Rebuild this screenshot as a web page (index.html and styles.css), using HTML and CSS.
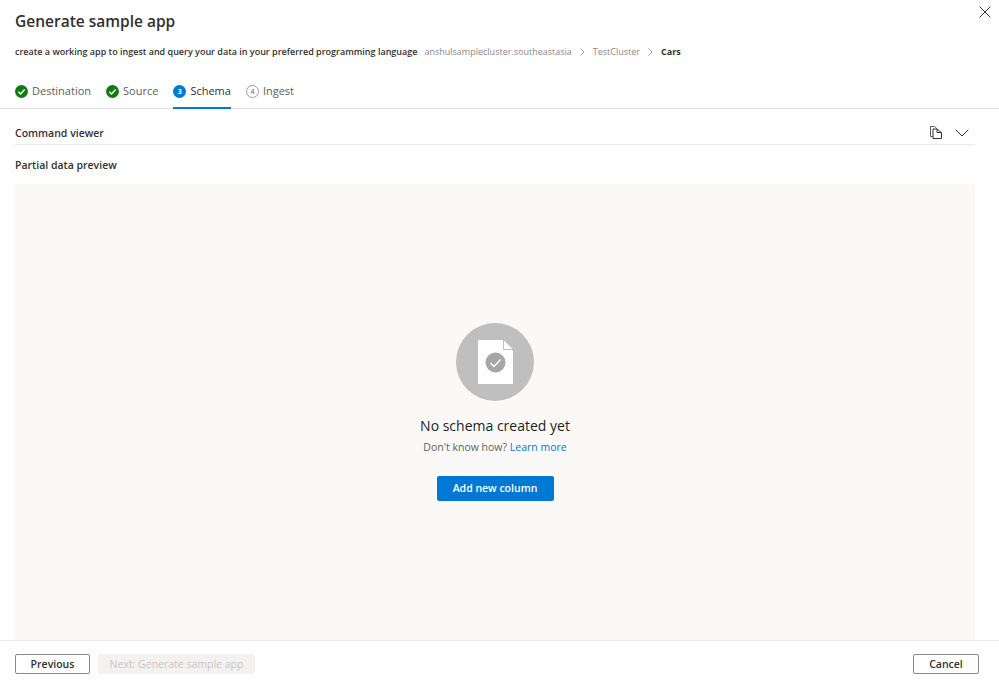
FILE: index.html
```html
<!DOCTYPE html>
<html lang="en">
<head>
<meta charset="utf-8">
<title>Generate sample app</title>
<link rel="stylesheet" href="styles.css">
</head>
<body>
<div class="panel">
  <header class="head">
    <h1 class="title">Generate sample app</h1>
    <button class="close" aria-label="Close">
      <svg width="12" height="12" viewBox="0 0 12 12"><path d="M.7.7l10.6 10.6M11.3.7L.7 11.3" stroke="#323130" stroke-width="1" fill="none"/></svg>
    </button>
    <div class="sub">
      <span class="sub-text">create a working app to ingest and query your data in your preferred programming language</span>
      <span class="crumb">anshulsamplecluster.southeastasia</span>
      <svg class="sep" width="5" height="8" viewBox="0 0 5 8"><path d="M.5.5L4 4 .5 7.5" stroke="#a19f9d" fill="none"/></svg>
      <span class="crumb">TestCluster</span>
      <svg class="sep" width="5" height="8" viewBox="0 0 5 8"><path d="M.5.5L4 4 .5 7.5" stroke="#a19f9d" fill="none"/></svg>
      <span class="crumb-cur">Cars</span>
    </div>
  </header>
  <nav class="tabs">
    <div class="tab">
      <svg class="ico" width="13" height="13" viewBox="0 0 13 13"><circle cx="6.5" cy="6.5" r="6.5" fill="#107c10"/><path d="M3.4 6.8l2.2 2.1 4-4.3" stroke="#fff" stroke-width="1.4" fill="none"/></svg>
      <span>Destination</span>
    </div>
    <div class="tab">
      <svg class="ico" width="13" height="13" viewBox="0 0 13 13"><circle cx="6.5" cy="6.5" r="6.5" fill="#107c10"/><path d="M3.4 6.8l2.2 2.1 4-4.3" stroke="#fff" stroke-width="1.4" fill="none"/></svg>
      <span>Source</span>
    </div>
    <div class="tab tab-on">
      <span class="num num-on">3</span>
      <span>Schema</span>
    </div>
    <div class="tab">
      <span class="num num-off">4</span>
      <span>Ingest</span>
    </div>
  </nav>
  <main class="body">
    <div class="cmd">
      <span class="label">Command viewer</span>
      <div class="cmd-icons">
        <svg width="12" height="13" viewBox="0 0 12 13"><path d="M.5 10.5V.5h4.2l3 3v7z" fill="#fff" stroke="#605e5c"/><path d="M3 3h3.8L11.5 6.5v6H3z" fill="#fff" stroke="#323130"/><path d="M7 3v3.500h4.500" fill="none" stroke="#323130"/></svg>
        <svg width="14" height="8" viewBox="0 0 14 8"><path d="M.7.7L7 7l6.300-6.300" stroke="#323130" fill="none"/></svg>
      </div>
    </div>
    <div class="label preview-label">Partial data preview</div>
    <section class="empty">
      <svg class="empty-ico" width="78" height="78" viewBox="0 0 78 78">
        <circle cx="39" cy="39" r="39" fill="#bfbfbf"/>
        <path d="M22 17h24l11 11v33H22z" fill="#fff"/>
        <path d="M47 17l10 10H47z" fill="#bfbfbf"/>
        <path d="M48 17.500l8.500 8.500H48z" fill="#fff"/>
        <circle cx="39.500" cy="39.500" r="10" fill="#a6a6a6"/>
        <path d="M34.500 40l3.500 3.500 6.500-7" stroke="#fff" stroke-width="1.300" fill="none"/>
      </svg>
      <div class="empty-title">No schema created yet</div>
      <div class="empty-text">Don't know how? <a class="link" href="#">Learn more</a></div>
      <button class="btn-primary">Add new column</button>
    </section>
  </main>
  <footer class="foot">
    <button class="btn">Previous</button>
    <button class="btn-disabled" disabled>Next: Generate sample app</button>
    <button class="btn btn-cancel">Cancel</button>
  </footer>
</div>
</body>
</html>
```
FILE: styles.css
```css
* { box-sizing: border-box; }
html, body { margin: 0; height: 100%; }
body { background: #fff; color: #323130; font-family: "Open Sans", "Noto Sans", sans-serif; overflow: hidden; }
.panel { width: 999px; height: 687px; display: flex; flex-direction: column; }
.head { position: relative; padding: 10px 15px 0; height: 79px; }
.title { margin: 0; font-size: 15.5px; font-weight: 600; line-height: 22px; color: #323130; }
.close { position: absolute; top: 6px; right: 8px; width: 12px; height: 12px; padding: 0; border: 0; background: none; display: flex; }
.sub { display: flex; align-items: center; margin-top: 12px; font-size: 9px; line-height: 16px; white-space: nowrap; }
.sub-text { font-weight: 600; color: #323130; font-size: 9px; }
.crumb { color: #8a8886; margin-left: 7px; font-size: 9px; }
.sep { margin-left: 8px; margin-right: 1px; }
.crumb-cur { font-weight: 700; margin-left: 7px; color: #323130; }
.tabs { display: flex; gap: 15px; padding: 0 15px; height: 30px; border-bottom: 1px solid #e1dfdd; }
.tab { display: flex; align-items: flex-start; gap: 4px; height: 30px; padding-top: 4px; font-size: 11px; line-height: 16px; color: #605e5c; }
.tab .ico { margin-top: 2px; }
.tab-on { border-bottom: 2px solid #0078d4; color: #323130; font-weight: 400; }
.num { width: 13px; height: 13px; margin-top: 2px; border-radius: 50%; font-size: 7px; line-height: 13px; text-align: center; }
.num-on { background: #0078d4; color: #fff; font-weight: 700; }
.num-off { border: 1px solid #a19f9d; line-height: 11px; color: #605e5c; }
.body { flex: 1; min-height: 0; padding: 0 24px 0 15px; display: flex; flex-direction: column; }
.cmd { display: flex; align-items: center; justify-content: space-between; height: 36px; border-bottom: 1px solid #edebe9; padding-top: 12px; }
.label { font-size: 10.500px; font-weight: 600; line-height: 16px; color: #323130; }
.cmd-icons { display: flex; align-items: center; gap: 13px; padding-right: 6px; }
.preview-label { margin-top: 12px; margin-bottom: 11px; }
.empty { flex: 1; min-height: 0; background: #faf9f8; display: flex; flex-direction: column; align-items: center; padding-top: 139px; }
.empty-title { margin-top: 15px; font-size: 14px; line-height: 20px; color: #201f1e; }
.empty-text { margin-top: 3px; font-size: 10.500px; line-height: 16px; color: #605e5c; }
.link { color: #0078d4; text-decoration: none; }
.btn-primary { margin-top: 21px; width: 117px; height: 25px; border: 0; border-radius: 2px; background: #0078d4; color: #fff; font: 600 10.500px/25px "Open Sans", sans-serif; padding: 0; }
.foot { display: flex; align-items: center; gap: 8px; height: 47px; padding: 0 20px 0 15px; border-top: 1px solid #edebe9; flex: none; }
.btn { width: 75px; height: 20px; padding: 0; background: #fff; border: 1px solid #8a8886; border-radius: 2px; color: #323130; font: 600 10.500px/18px "Open Sans", sans-serif; }
.btn-disabled { width: 157px; height: 20px; padding: 0; background: #f3f2f1; border: 0; border-radius: 2px; color: #c8c6c4; font: 400 10.500px/20px "Open Sans", sans-serif; }
.btn-cancel { width: 66px; margin-left: auto; }
```
